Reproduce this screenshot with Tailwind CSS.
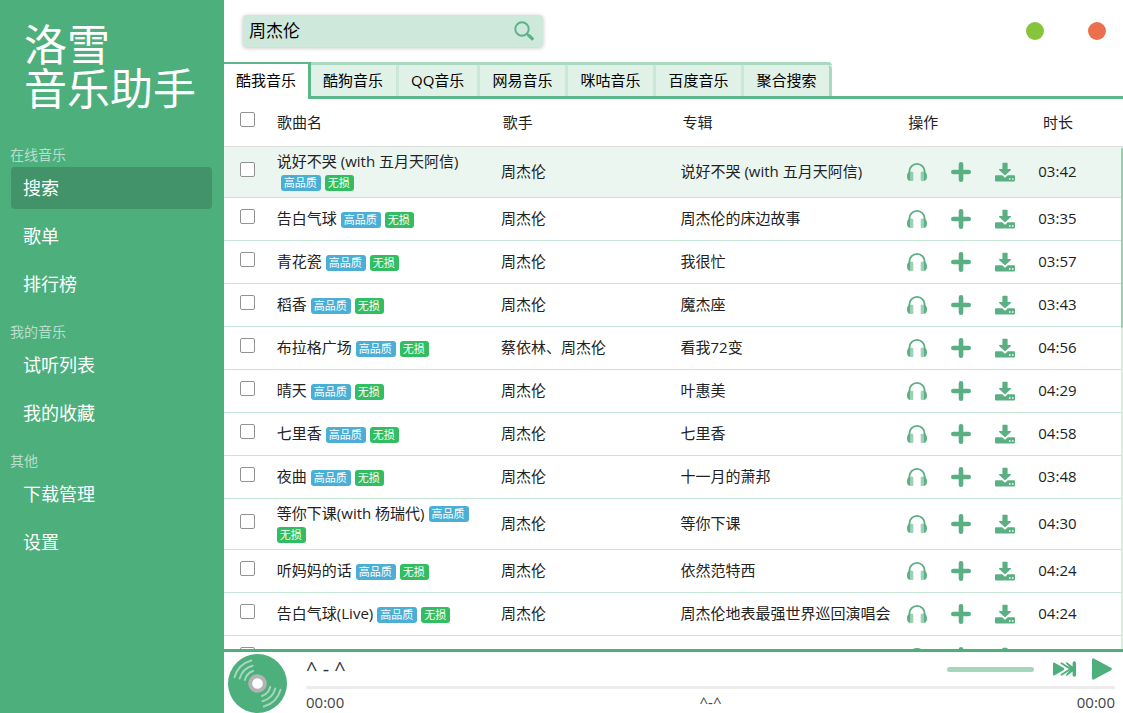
<!DOCTYPE html>
<html lang="zh-CN">
<head>
<meta charset="utf-8">
<title>洛雪音乐助手</title>
<script src="https://cdn.jsdelivr.net/npm/@tailwindcss/browser@4"></script>
</head>
<body class="flex h-screen overflow-hidden bg-white font-['Open_Sans','Noto_Sans_CJK_SC',sans-serif] text-[15px] text-[#222]">
<svg class="hidden" aria-hidden="true">
  <symbol id="listen" viewBox="0 0 20 20">
    <path d="M2.400 11.500V9.500a7.600 7.600 0 0 1 15.200 0v2" fill="none" stroke="currentColor" stroke-width="1.900"/>
    <path d="M3.300 9.800C1.200 10 0 11.700 0 14.300s.8 4.400 3.300 4.700z M16.700 9.800c2.100.2 3.300 1.900 3.300 4.500s-.8 4.400-3.300 4.700z" fill="currentColor"/>
    <path d="M3.300 9.800h2a1 1 0 0 1 1 1v7.200a1 1 0 0 1-1 1h-2zM16.700 9.800h-2a1 1 0 0 0-1 1v7.200a1 1 0 0 0 1 1h2z" fill="currentColor" opacity=".6"/>
  </symbol>
  <symbol id="add" viewBox="0 0 20 20">
    <path d="M10 2.300v15.400M2.300 10h15.400" stroke="currentColor" stroke-width="4.600" stroke-linecap="round"/>
  </symbol>
  <symbol id="download" viewBox="0 0 20 20">
    <path d="M8 .8h4a.6.6 0 0 1 .6.600V7h2.900a.6.6 0 0 1 .4 1L10.500 13a.7.7 0 0 1-1 0L4.100 8a.6.6 0 0 1 .4-1h2.900V1.400A.6.6 0 0 1 8 .8z" fill="currentColor"/>
    <path fill-rule="evenodd" d="M1 13.200h6.300L9 14.900a1.400 1.400 0 0 0 2 0l1.700-1.700H19a1 1 0 0 1 1 1v4.200a1 1 0 0 1-1 1H1a1 1 0 0 1-1-1v-4.200a1 1 0 0 1 1-1zM14 16.200v1.600h1.500v-1.600zM17 16.200v1.600h1.500v-1.600z" fill="currentColor"/>
  </symbol>
</svg>

<aside class="w-56 shrink-0 bg-[#4daf7c] text-white">
  <h1 class="px-6 pt-[23px] text-[43px] leading-[44px] font-normal">洛雪<br>音乐助手</h1>
  <nav class="mt-[23px] pr-3">
    <h2 class="pt-2.5 pb-px pl-2.5 text-sm leading-[22px] text-[#b8dfcb]">在线音乐</h2>
    <ul class="pl-[11px] text-lg leading-[42px]">
      <li class="mb-1.5"><a href="#search" class="block rounded bg-[#429369] pl-3">搜索</a></li>
      <li class="mb-1.5"><a href="#songlist" class="block rounded pl-3">歌单</a></li>
      <li class="mb-1.5"><a href="#rank" class="block rounded pl-3">排行榜</a></li>
    </ul>
    <h2 class="pt-2.5 pb-px pl-2.5 text-sm leading-[22px] text-[#b8dfcb]">我的音乐</h2>
    <ul class="pl-[11px] text-lg leading-[42px]">
      <li class="mb-1.5"><a href="#listen-list" class="block rounded pl-3">试听列表</a></li>
      <li class="mb-1.5"><a href="#favorites" class="block rounded pl-3">我的收藏</a></li>
    </ul>
    <h2 class="pt-2.5 pb-px pl-2.5 text-sm leading-[22px] text-[#b8dfcb]">其他</h2>
    <ul class="pl-[11px] text-lg leading-[42px]">
      <li class="mb-1.5"><a href="#downloads" class="block rounded pl-3">下载管理</a></li>
      <li class="mb-1.5"><a href="#settings" class="block rounded pl-3">设置</a></li>
    </ul>
  </nav>
</aside>

<main class="flex min-w-0 flex-1 flex-col">
  <header class="flex h-[62px] shrink-0 items-center justify-between pr-[17px] pl-[19px]">
    <form class="flex h-8 w-[300px] items-center rounded bg-[#cee9db] pr-2 pl-1.5 shadow-[0_1px_4px_rgba(0,0,0,0.25)]" onsubmit="return false">
      <input type="text" aria-label="搜索歌曲" value="周杰伦" class="min-w-0 flex-1 bg-transparent text-[17px] text-black outline-none">
      <button aria-label="搜索" class="text-[#5bb286]">
        <svg class="size-[22px]" viewBox="0 0 22 22" fill="none" stroke="currentColor"><circle cx="9" cy="9" r="6.700" stroke-width="1.900"/><path d="M13.800 13.600l2.200 2.100" stroke-width="2"/><path d="M15.800 15.500l3.500 3.200" stroke-width="3.200" stroke-linecap="round"/></svg>
      </button>
    </form>
    <div class="flex gap-11">
      <button aria-label="最小化" class="size-[18px] rounded-full bg-[#85c43b]"></button>
      <button aria-label="关闭" class="size-[18px] rounded-full bg-[#eb6f4d]"></button>
    </div>
  </header>

  <div role="tablist" class="flex h-[37px] shrink-0 leading-[31px] text-black">
    <button role="tab" aria-selected="true" class="border-t-2 border-r-3 border-[#5cb78a] bg-white px-3 pb-0.5">酷我音乐</button>
    <div class="flex flex-1 border-b-3 border-[#5cb78a]">
      <div class="flex overflow-hidden rounded-tr border-t-3 border-[#a9dac1]">
        <button role="tab" class="border-r-3 border-[#c9e8d8] bg-[#e0f1e8] pr-[13px] pl-3">酷狗音乐</button>
        <button role="tab" class="border-r-3 border-[#c9e8d8] bg-[#e0f1e8] pr-[13px] pl-3">QQ音乐</button>
        <button role="tab" class="border-r-3 border-[#c9e8d8] bg-[#e0f1e8] pr-[13px] pl-3">网易音乐</button>
        <button role="tab" class="border-r-3 border-[#c9e8d8] bg-[#e0f1e8] pr-[13px] pl-3">咪咕音乐</button>
        <button role="tab" class="border-r-3 border-[#c9e8d8] bg-[#e0f1e8] pr-[13px] pl-3">百度音乐</button>
        <button role="tab" class="rounded-tr border-r-3 border-[#a9dac1] bg-[#e0f1e8] pr-[13px] pl-3">聚合搜索</button>
      </div>
    </div>
  </div>

  <table class="w-full shrink-0 table-fixed text-left">
    <thead>
      <tr class="h-[47px] border-b border-[#dcdfdd]">
        <th class="w-[5%] pb-[5px] pl-0.5 align-middle"><input type="checkbox" aria-label="全选" class="mx-auto block size-[15px] appearance-none rounded-xs border border-[#929292] bg-white"></th>
        <th class="w-[25%] pl-2 font-normal">歌曲名</th>
        <th class="w-[20%] pl-[9px] font-normal">歌手</th>
        <th class="w-[25%] pl-[9px] font-normal">专辑</th>
        <th class="w-[15%] pl-2.5 font-normal">操作</th>
        <th class="w-[10%] pl-2.5 font-normal">时长</th>
      </tr>
    </thead>
  </table>
  <div class="flex min-h-0 flex-1">
    <div class="min-w-0 flex-1 overflow-hidden">
      <table class="w-full table-fixed leading-[21px]">
        <colgroup><col class="w-[5%]"><col class="w-[25%]"><col class="w-[20%]"><col class="w-[25%]"><col class="w-[15%]"><col class="w-[10%]"></colgroup>
        <tbody id="songs"></tbody>
      </table>
    </div>
    <div class="w-0.5 bg-[#d5eee1]"><div class="mt-px h-[180px] rounded bg-[#94d0b1]"></div></div>
  </div>

  <footer class="flex h-16 shrink-0 border-t-3 border-[#4daf7c] pr-2 pl-1 text-[#333]">
    <svg class="mt-0.5 size-[59px] shrink-0" viewBox="0 0 59 59" fill="none">
      <circle cx="29.500" cy="29.500" r="29.500" fill="#4daf7c"/>
      <g stroke="#a6d7be" stroke-width="2" stroke-linecap="round">
        <path d="M6.500 23.300A24 24 0 0 1 23.300 6.500M11.700 24.500A18.500 18.500 0 0 1 24.500 11.700M16.800 26A13.200 13.200 0 0 1 25 17"/>
        <path d="M52.500 35.700A24 24 0 0 1 35.700 52.500M47.300 34.500A18.500 18.500 0 0 1 34.500 47.300M42.200 33A13.200 13.200 0 0 1 34 42"/>
      </g>
      <circle cx="29.500" cy="29.500" r="7.300" fill="#fff" stroke="#b3b3b3" stroke-width="4"/>
    </svg>
    <div class="ml-[19px] flex min-w-0 flex-1 flex-col">
      <div class="flex h-[34px] shrink-0 items-center">
        <span class="flex-1 text-xl leading-[34px]">^ - ^</span>
        <div role="slider" aria-label="音量" aria-valuenow="100" class="mr-[18px] h-[5px] w-[87px] rounded-sm bg-[#a6d7bd]"></div>
        <button aria-label="下一首" class="mr-3.5 text-[#4daf7c]">
          <svg class="h-[22px] w-[25px] drop-shadow-xs" viewBox="0 0 25 22" fill="currentColor"><path d="M1 5.500Q1 3.800 2.600 4.700L11.800 10.100Q13 11 11.800 11.900L2.600 17.300Q1 18.200 1 16.500z"/><path d="M9.500 5.300L18.500 11l-9 5.700" fill="none" stroke="currentColor" stroke-width="1.800" stroke-linecap="round" stroke-linejoin="round"/><path d="M13.500 4.800q.8-.8 1.800-.2L20.600 8.500V5q0-1.700 1.700-1.700T24 5v12q0 1.700-1.700 1.700T20.600 17v-3.500l-5.300 3.900q-1 .6-1.800-.2l5.500-6.200z"/></svg>
        </button>
        <button aria-label="播放" class="text-[#4daf7c]">
          <svg class="mr-0.5 h-6 w-[22px] drop-shadow-xs" viewBox="0 0 22 24" fill="currentColor"><path d="M1 3Q1 .5 3.200 1.700L20 10.800Q21.800 12 20 13.200L3.200 22.300Q1 23.500 1 21z"/></svg>
        </button>
      </div>
      <div class="h-[3px] shrink-0 rounded-sm bg-[#ececec]"></div>
      <div class="flex justify-between leading-[26px] text-[#444]"><span>00:00</span><span>^-^</span><span>00:00</span></div>
    </div>
  </footer>
</main>

<script>
const songs = [
  ['说好不哭 (with 五月天阿信)', '周杰伦', '说好不哭 (with 五月天阿信)', '03:42'],
  ['告白气球', '周杰伦', '周杰伦的床边故事', '03:35'],
  ['青花瓷', '周杰伦', '我很忙', '03:57'],
  ['稻香', '周杰伦', '魔杰座', '03:43'],
  ['布拉格广场', '蔡依林、周杰伦', '看我72变', '04:56'],
  ['晴天', '周杰伦', '叶惠美', '04:29'],
  ['七里香', '周杰伦', '七里香', '04:58'],
  ['夜曲', '周杰伦', '十一月的萧邦', '03:48'],
  ['等你下课(with 杨瑞代)', '周杰伦', '等你下课', '04:30'],
  ['听妈妈的话', '周杰伦', '依然范特西', '04:24'],
  ['告白气球(Live)', '周杰伦', '周杰伦地表最强世界巡回演唱会', '04:24'],
  ['', '', '', '']
];
const icon = (id, label) => `<button aria-label="${label}"><svg class="size-5"><use href="#${id}"/></svg></button>`;
const badges = '<span class="ml-1 inline-block rounded-[3px] bg-[#4baed5] pr-1 pl-[3px] align-middle text-[11px] leading-4 text-white">高品质</span> <span class="inline-block rounded-[3px] bg-[#33bd61] pr-1 pl-[3px] align-middle text-[11px] leading-4 text-white">无损</span>';
document.getElementById('songs').innerHTML = songs.map(([name, singer, album, time], i) => `
  <tr class="h-[43px] border-b border-[#c5e6d6] ${i ? '' : 'bg-[#ebf6f1]'}">
    <td class="pb-[5px] pl-0.5"><input type="checkbox" aria-label="选择 ${name}" class="mx-auto block size-[15px] appearance-none rounded-xs border border-[#929292] bg-white"></td>
    <td class="px-2 py-1">${name}${name ? badges : ''}</td>
    <td class="px-2">${singer}</td>
    <td class="pl-2 whitespace-nowrap">${album}</td>
    <td class="pl-2.5"><div class="flex gap-6 text-[#5bb083]">${icon('listen', '试听')}${icon('add', '添加')}${icon('download', '下载')}</div></td>
    <td class="pl-[7px]">${time}</td>
  </tr>`).join('');
</script>
</body>
</html>
